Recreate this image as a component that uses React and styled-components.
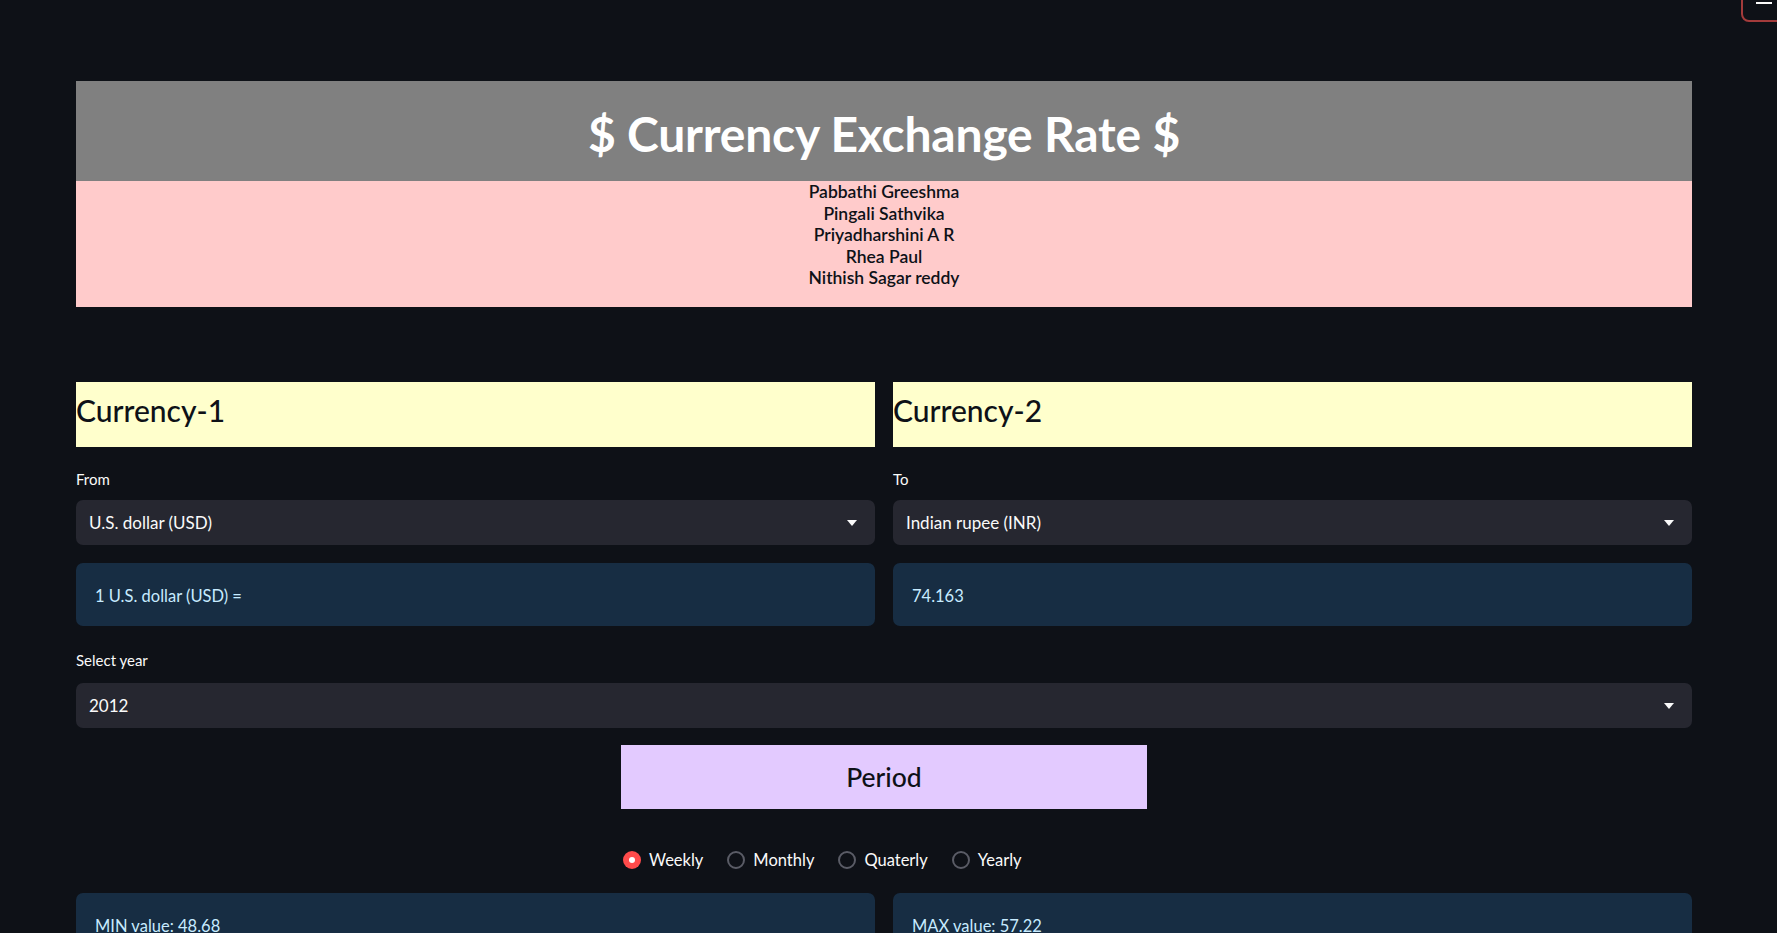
import React from "react";
import styled, { createGlobalStyle } from "styled-components";

const GlobalStyle = createGlobalStyle`
  html, body {
    margin: 0;
    padding: 0;
    background-color: #0e1117;
    overflow: hidden;
  }
  body {
    font-family: Lato, "Noto Sans", sans-serif;
    color: #fafafa;
  }
`;

const Page = styled.div`
  position: relative;
  min-height: 933px;
  padding: 81px 85px 0 76px;
  display: flex;
  flex-direction: column;
`;

const MenuButton = styled.div`
  position: absolute;
  top: -12px;
  right: -10px;
  width: 46px;
  height: 34px;
  border: 2px solid #a33b3b;
  border-radius: 8px;
  display: flex;
  flex-direction: column;
  justify-content: flex-end;
  align-items: center;
  gap: 3px;
  padding-bottom: 16px;
  box-sizing: border-box;
`;
const MenuLine = styled.span`
  width: 16px;
  height: 2px;
  background-color: #fafafa;
`;

const TitleBar = styled.div`
  background-color: #808080;
  height: 100px;
  display: flex;
  justify-content: center;
  align-items: center;
  padding-top: 4px;
  box-sizing: border-box;
`;
const Title = styled.h1`
  margin: 0;
  font-size: 48px;
  font-weight: 700;
  color: #ffffff;
  letter-spacing: -0.2px;
`;
const Names = styled.div`
  background-color: #ffcbcb;
  height: 126px;
  box-sizing: border-box;
  padding-top: 0;
  display: flex;
  flex-direction: column;
  align-items: center;
  color: #0e1117;
  font-size: 17.5px;
  font-weight: 600;
  line-height: 21.5px;
`;

const Columns = styled.div`
  margin-top: 75px;
  display: grid;
  grid-template-columns: 1fr 1fr;
  gap: 18px;
`;
const Column = styled.div`
  display: flex;
  flex-direction: column;
`;
const CurrencyHead = styled.div`
  background-color: #ffffcc;
  height: 65px;
  display: flex;
  align-items: center;
  padding-bottom: 10px;
  box-sizing: border-box;
  color: #0e1117;
  font-size: 30px;
  font-weight: 500;
`;
const Label = styled.div`
  font-size: 15px;
  color: #fafafa;
  margin: ${(p) => p.$top || 23}px 0 ${(p) => p.$bottom || 12}px;
  line-height: 18px;
`;
const Select = styled.div`
  height: 45px;
  background-color: #262730;
  border-radius: 7px;
  display: flex;
  align-items: center;
  justify-content: space-between;
  padding: 0 18px 0 13px;
  font-size: 17px;
  color: #fafafa;
`;
const Caret = styled.span`
  width: 0;
  height: 0;
  border-left: 5px solid transparent;
  border-right: 5px solid transparent;
  border-top: 6px solid #fafafa;
`;
const InfoBox = styled.div`
  margin-top: ${(p) => (p.$stat ? 0 : 18)}px;
  height: 63px;
  background-color: #172d43;
  border-radius: 7px;
  display: flex;
  align-items: ${(p) => (p.$stat ? "flex-start" : "center")};
  padding: ${(p) => (p.$stat ? "23px 19px 0" : "2px 19px 0")};
  box-sizing: border-box;
  color: #c7ebff;
  font-size: 16.5px;
`;
const PeriodBox = styled.div`
  align-self: center;
  margin-top: 17px;
  width: 526px;
  height: 64px;
  background-color: #e3caff;
  display: flex;
  justify-content: center;
  align-items: center;
  color: #0e1117;
  font-size: 26.5px;
  font-weight: 500;
`;
const RadioRow = styled.div`
  margin-top: 41px;
  margin-left: 547px;
  display: flex;
  gap: 24px;
  font-size: 16.5px;
`;
const RadioItem = styled.label`
  display: flex;
  align-items: center;
  gap: 8px;
`;
const RadioDot = styled.span`
  width: 18px;
  height: 18px;
  border-radius: 50%;
  box-sizing: border-box;
  display: flex;
  justify-content: center;
  align-items: center;
  background-color: ${(p) => (p.$on ? "#ff4b4b" : "transparent")};
  border: ${(p) => (p.$on ? "none" : "2px solid #5a5c66")};
  &::after {
    content: "";
    width: 6px;
    height: 6px;
    border-radius: 50%;
    background-color: ${(p) => (p.$on ? "#ffffff" : "transparent")};
  }
`;
const StatsRow = styled.div`
  margin-top: 23px;
  display: grid;
  grid-template-columns: 1fr 1fr;
  gap: 18px;
`;

const names = [
  "Pabbathi Greeshma",
  "Pingali Sathvika",
  "Priyadharshini A R",
  "Rhea Paul",
  "Nithish Sagar reddy",
];
const periods = ["Weekly", "Monthly", "Quaterly", "Yearly"];

const App = () => {
  return (
    <>
      <GlobalStyle />
      <Page>
        <MenuButton>
          <MenuLine />
          <MenuLine />
        </MenuButton>
        <TitleBar>
          <Title>$ Currency Exchange Rate $</Title>
        </TitleBar>
        <Names>
          {names.map((n) => (
            <span key={n}>{n}</span>
          ))}
        </Names>

        <Columns>
          <Column>
            <CurrencyHead>Currency-1</CurrencyHead>
            <Label>From</Label>
            <Select>
              U.S. dollar (USD)
              <Caret />
            </Select>
            <InfoBox>1 U.S. dollar (USD) =</InfoBox>
          </Column>
          <Column>
            <CurrencyHead>Currency-2</CurrencyHead>
            <Label>To</Label>
            <Select>
              Indian rupee (INR)
              <Caret />
            </Select>
            <InfoBox>74.163</InfoBox>
          </Column>
        </Columns>

        <Label $top={25} $bottom={14}>
          Select year
        </Label>
        <Select>
          2012
          <Caret />
        </Select>
        <PeriodBox>Period</PeriodBox>
        <RadioRow>
          {periods.map((p, i) => (
            <RadioItem key={p}>
              <RadioDot $on={i === 0} />
              {p}
            </RadioItem>
          ))}
        </RadioRow>
        <StatsRow>
          <InfoBox $stat>MIN value: 48.68</InfoBox>
          <InfoBox $stat>MAX value: 57.22</InfoBox>
        </StatsRow>
      </Page>
    </>
  );
};

export default App;
